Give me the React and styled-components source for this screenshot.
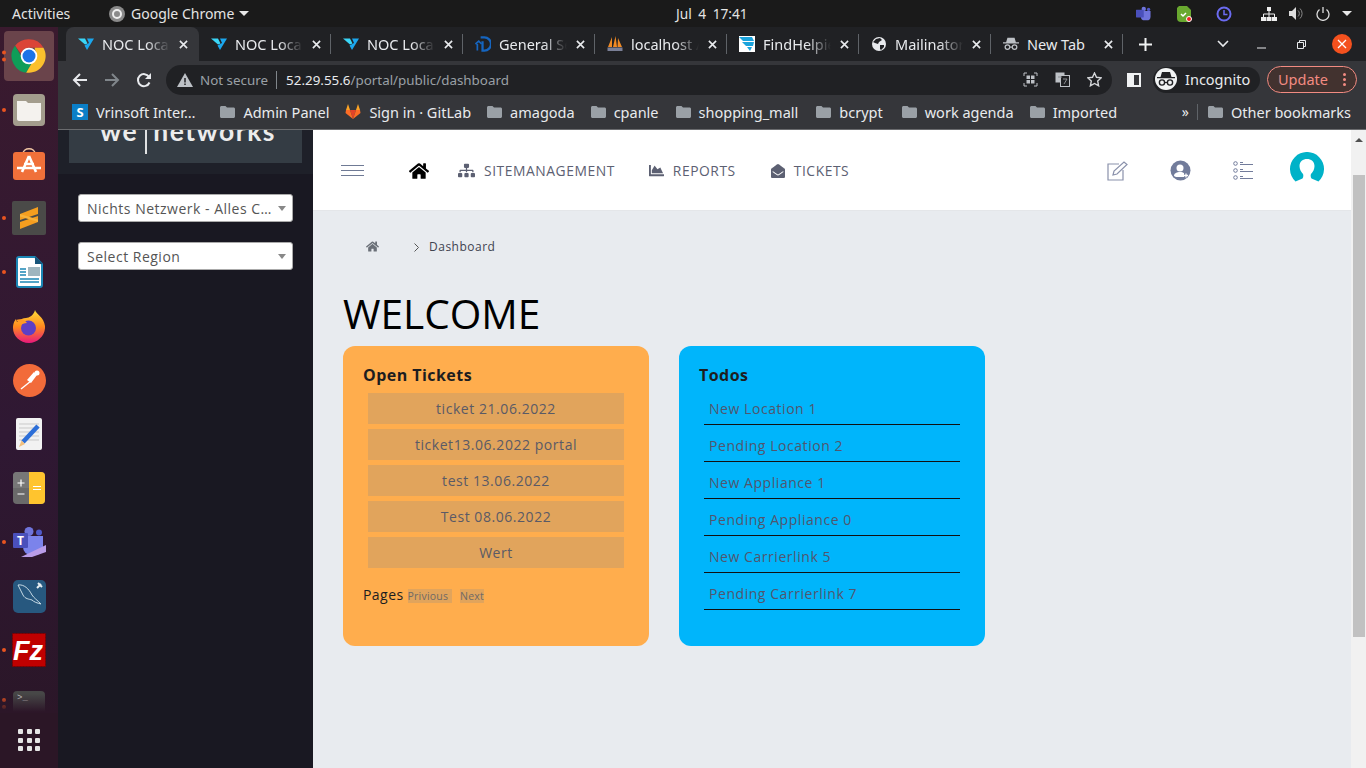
import React from "react";
import styled, { createGlobalStyle } from "styled-components";
import { FaHome, FaSitemap, FaChartArea, FaEnvelopeOpen } from "react-icons/fa";

const GlobalStyle = createGlobalStyle`
  html, body { margin: 0; padding: 0; height: 100%; overflow: hidden; }
  body { font-family: "Open Sans", "Noto Sans", sans-serif; }
  * { box-sizing: border-box; }
`;

const uiFont = `"Noto Sans", "Open Sans", sans-serif`;

const Screen = styled.div`
  width: 1366px;
  height: 768px;
  display: flex;
  flex-direction: column;
  overflow: hidden;
`;

/* gnome top bar */
const TopBar = styled.div`
  height: 27px;
  flex: none;
  background: #1a1a1a;
  color: #e4e4e4;
  font: 14px ${uiFont};
  display: grid;
  grid-template-columns: 676px auto 1fr;
  align-items: center;
`;
const TopLeft = styled.div`
  display: flex;
  align-items: center;
  padding-left: 12px;
`;
const AppName = styled.span`
  margin: 0 5px 0 6px;
`;
const Activities = styled.span`
  width: 97px;
`;
const Clock = styled.div`
  word-spacing: 3px;
  font-size: 13.7px;
`;
const Tray = styled.div`
  display: flex;
  align-items: center;
  justify-content: flex-end;
  gap: 29px;
  padding-right: 14px;
`;
const TrayGroup = styled.div`
  display: flex;
  align-items: center;
  gap: ${({ gap }) => gap}px;
`;
const Caret = styled.span`
  width: 0;
  height: 0;
  border-left: 5px solid transparent;
  border-right: 5px solid transparent;
  border-top: 5px solid #e8e8e8;
`;

const Desk = styled.div`
  flex: 1;
  min-height: 0;
  display: flex;
`;

/* ubuntu dock */
const Dock = styled.div`
  width: 58px;
  flex: none;
  background: linear-gradient(180deg, #3a1a2e 0%, #2f1833 55%, #2a1626 100%);
  padding-top: 2px;
  display: flex;
  flex-direction: column;
  align-items: center;
  position: relative;
`;
const DockItem = styled.div`
  width: 50px;
  height: ${({ short }) => (short ? "37px" : "50px")};
  margin-bottom: ${({ short }) => (short ? "0" : "4px")};
  margin-top: ${({ first }) => (first ? "2px" : "0")};
  padding-top: ${({ short }) => (short ? "12px" : "0")};
  border-radius: 4px;
  background: ${({ active }) => (active ? "#6a444b" : "transparent")};
  display: flex;
  align-items: ${({ short }) => (short ? "flex-start" : "center")};
  justify-content: center;
  position: relative;
`;
const RunDots = styled.div`
  position: absolute;
  left: -2px;
  top: ${({ short }) => (short ? "19px" : "50%")};
  transform: ${({ short }) => (short ? "none" : "translateY(-50%)")};
  display: flex;
  flex-direction: column;
  gap: 3px;
`;
const RunDot = styled.span`
  width: 4px;
  height: 4px;
  border-radius: 50%;
  background: #e95420;
`;
const DockFade = styled.div`
  position: absolute;
  left: 0;
  right: 0;
  top: 662px;
  height: 24px;
  background: linear-gradient(180deg, rgba(44, 22, 40, 0) 20%, #2c1628 95%);
`;
const DockBase = styled.div`
  position: absolute;
  left: 0;
  right: 0;
  top: 686px;
  bottom: 0;
  background: #2b1626;
`;
const AppGrid = styled.div`
  display: grid;
  grid-template-columns: repeat(3, 5px);
  grid-auto-rows: 5px;
  gap: 3.5px;
  position: absolute;
  top: 702px;
`;
const AppDot = styled.span`
  background: #e6e6e6;
  border-radius: 1px;
`;

const Main = styled.div`
  flex: 1;
  min-width: 0;
  display: flex;
  flex-direction: column;
`;

/* chrome frame */
const TabStrip = styled.div`
  height: 34px;
  flex: none;
  background: #202124;
  display: flex;
  align-items: stretch;
  padding-left: 8px;
  color: #e8eaed;
  font: 14.5px ${uiFont};
`;
const Tab = styled.div`
  width: ${({ active }) => (active ? "133px" : "132px")};
  flex: none;
  display: flex;
  align-items: center;
  padding-left: 12px;
  position: relative;
  background: ${({ active }) => (active ? "#35363a" : "transparent")};
  border-radius: 8px 8px 0 0;
  &::after {
    content: "";
    position: absolute;
    right: 0;
    top: 7px;
    bottom: 7px;
    width: 1px;
    background: ${({ sep }) => (sep ? "#5f6368" : "transparent")};
  }
`;
const TabIcon = styled.span`
  width: 16px;
  height: 16px;
  flex: none;
  display: flex;
  margin-right: 8px;
`;
const TabLabel = styled.span`
  width: 68px;
  margin-right: 5px;
  flex: none;
  white-space: nowrap;
  overflow: hidden;
  -webkit-mask-image: ${({ plain }) => (plain ? "none" : "linear-gradient(90deg, #000 65%, transparent 100%)")};
`;
const TabClose = styled.span`
  width: 16px;
  height: 16px;
  flex: none;
  display: flex;
  align-items: center;
  justify-content: center;
`;
const WindowButtons = styled.div`
  display: flex;
  align-items: center;
  flex: 1;
`;
const NewTab = styled.span`
  margin-left: 16px;
  display: flex;
`;
const TabSearch = styled.span`
  margin-left: 65px;
  display: flex;
`;
const WinBtn = styled.span`
  margin-left: ${({ gap }) => gap}px;
  display: flex;
`;
const CloseBtn = styled.span`
  width: 20px;
  height: 20px;
  border-radius: 50%;
  background: #f4511e;
  margin-left: 26px;
  display: flex;
  align-items: center;
  justify-content: center;
`;

const Toolbar = styled.div`
  height: 35px;
  flex: none;
  background: #35363a;
  display: flex;
  align-items: center;
  padding: 2px 0 0 14px;
`;
const NavBtn = styled.span`
  width: 32px;
  display: flex;
  justify-content: flex-start;
`;
const Omnibox = styled.div`
  width: 946px;
  height: 30px;
  margin-left: -2px;
  flex: none;
  border-radius: 15px;
  background: #202124;
  display: flex;
  align-items: center;
  padding: 0 10px 0 11px;
  font: 13.4px ${uiFont};
  color: #9aa0a6;
`;
const NotSecure = styled.span`
  margin-left: 7px;
  padding-right: 8px;
  border-right: 1px solid #80868b;
  line-height: 18px;
`;
const Url = styled.span`
  margin-left: 9px;
  flex: 1;
  white-space: nowrap;
`;
const Host = styled.span`
  color: #e8eaed;
`;
const OmniIcons = styled.div`
  display: flex;
  align-items: center;
  gap: 17px;
`;
const SidePanel = styled.span`
  width: 14px;
  height: 14px;
  margin-left: 15px;
  border: 2px solid #f1f3f4;
  border-left-width: 7px;
  flex: none;
`;
const Incognito = styled.div`
  width: 107px;
  height: 26px;
  margin-left: 12px;
  border-radius: 13px;
  background: #202124;
  display: flex;
  align-items: center;
  gap: 8px;
  padding: 0 0 1px 2px;
  font: 14.5px ${uiFont};
  color: #e8eaed;
  flex: none;
`;
const IncognitoBadge = styled.span`
  width: 22px;
  height: 22px;
  border-radius: 50%;
  background: #f1f3f4;
  display: flex;
  align-items: center;
  justify-content: center;
`;
const Update = styled.div`
  width: 90px;
  height: 27px;
  margin-left: 7px;
  border-radius: 14px;
  border: 1px solid #f28b82;
  background: #42322f;
  color: #f28b82;
  font: 14.5px ${uiFont};
  display: flex;
  align-items: center;
  justify-content: space-between;
  padding: 0 6px 1px 10px;
  flex: none;
`;
const Kebab = styled.span`
  display: flex;
  flex-direction: column;
  gap: 2px;
  padding-right: 4px;
`;
const KebabDot = styled.span`
  width: 3px;
  height: 3px;
  border-radius: 50%;
  background: #f28b82;
`;

const Bookmarks = styled.div`
  height: 34px;
  flex: none;
  background: #35363a;
  border-bottom: 1px solid #6a6b6e;
  display: flex;
  align-items: center;
  padding: 0 0 2px 14px;
  font: 14.5px ${uiFont};
  color: #e8eaed;
  white-space: nowrap;
`;
const Bookmark = styled.div`
  display: flex;
  align-items: center;
  gap: 8px;
  margin-right: ${({ gap }) => gap}px;
`;
const BookmarkEnd = styled.div`
  display: flex;
  align-items: center;
  margin-left: auto;
  padding-right: 15px;
`;
const More = styled.span`
  font-size: 14px;
  margin-right: 8px;
`;
const BmSep = styled.span`
  width: 1px;
  height: 16px;
  background: #5f6368;
  margin-right: 10px;
`;
const SBadge = styled.span`
  width: 16px;
  height: 16px;
  background: #0b7fc7;
  color: #fff;
  font: bold 13px/16px ${uiFont};
  text-align: center;
`;

/* page */
const Page = styled.div`
  flex: 1;
  min-height: 0;
  display: flex;
`;
const Sidebar = styled.aside`
  width: 255px;
  flex: none;
  background: #191822;
`;
const LogoRow = styled.div`
  height: 44px;
  padding: 0 11px;
  background: #1e2029;
`;
const LogoBox = styled.div`
  height: 33px;
  background: #343c44;
  overflow: hidden;
  padding: 0 0 0 31px;
  color: #ececec;
  font: 700 26.5px/28px "Lato", sans-serif;
  letter-spacing: 1.5px;
  white-space: nowrap;
`;
const LogoText = styled.div`
  margin-top: -13px;
  height: 48px;
`;
const LogoBar = styled.span`
  display: inline-block;
  width: 2px;
  height: 32px;
  margin: 0 6px 0 7px;
  background: #dfe1e2;
  vertical-align: -13px;
`;
const Selects = styled.div`
  padding: 20px 20px 0;
  display: flex;
  flex-direction: column;
  gap: 20px;
`;
const SelectBox = styled.div`
  height: 28px;
  background: #fff;
  border: 1px solid #aaa;
  border-radius: 3px;
  padding: 0 20px 0 8px;
  position: relative;
  display: flex;
  align-items: center;
  font-size: 14px;
  letter-spacing: 0.5px;
  color: #555;
  &::after {
    content: "";
    position: absolute;
    right: 6px;
    top: 11px;
    border-left: 4px solid transparent;
    border-right: 4px solid transparent;
    border-top: 5px solid #888;
  }
`;
const SelectText = styled.span`
  overflow: hidden;
  white-space: nowrap;
  text-overflow: ellipsis;
`;

const Content = styled.main`
  flex: 1;
  min-width: 0;
  background: #e8ebef;
`;
const Header = styled.header`
  height: 81px;
  background: #fff;
  border-bottom: 1px solid #e4e6e9;
  display: flex;
  align-items: center;
  padding: 1px 27px 0 28px;
`;
const Burger = styled.div`
  width: 23px;
  display: flex;
  flex-direction: column;
  gap: 4px;
  margin-right: 45px;
`;
const BurgerLine = styled.span`
  height: 1px;
  background: #6f7a95;
`;
const NavItem = styled.div`
  display: flex;
  align-items: center;
  gap: 9px;
  margin-right: ${({ gap }) => gap}px;
  color: #5c6072;
  font-size: 13.85px;
  letter-spacing: 0.55px;
`;
const HeaderIcons = styled.div`
  margin-left: auto;
  display: flex;
  align-items: center;
`;
const HeaderIcon = styled.span`
  display: flex;
  margin-right: ${({ gap }) => gap}px;
`;
const Avatar = styled.div`
  width: 34px;
  height: 34px;
  margin-top: -4px;
  display: flex;
`;
const Body = styled.div`
  padding: 0 30px;
`;
const Breadcrumb = styled.div`
  height: 71px;
  padding-left: 23px;
  display: flex;
  align-items: center;
  font-size: 12px;
  color: #3f4350;
  letter-spacing: 0.5px;
`;
const CrumbSep = styled.span`
  display: flex;
  margin: 2px 10px 0 35px;
`;
const Welcome = styled.h1`
  margin: 0;
  height: 64px;
  font-size: 40.6px;
  line-height: 64px;
  font-weight: 400;
  color: #000;
`;
const Cards = styled.div`
  display: flex;
  gap: 30px;
`;
const Card = styled.section`
  width: 306px;
  height: 300px;
  border-radius: 12px;
  background: ${({ tone }) => tone};
  padding: 18px 20px 0;
`;
const CardTitle = styled.h2`
  margin: 0;
  font-size: 16px;
  line-height: 22px;
  font-weight: 700;
  letter-spacing: 0.45px;
  color: #1d1d1f;
`;
const TicketList = styled.div`
  margin: 7px 5px 0;
  display: flex;
  flex-direction: column;
  gap: 5px;
`;
const Ticket = styled.div`
  height: 31px;
  background: #e1a45c;
  color: #5a5a66;
  font-size: 14px;
  line-height: 31px;
  letter-spacing: 0.55px;
  text-align: center;
`;
const Pager = styled.div`
  margin-top: 17px;
  display: flex;
  align-items: center;
  font-size: 14px;
  letter-spacing: 0.45px;
  color: #1d1d1f;
`;
const PageTag = styled.span`
  margin-left: ${({ gap }) => gap}px;
  padding-right: ${({ pad }) => pad}px;
  height: 14px;
  background: #e1a45c;
  color: #6f6a66;
  font-size: 10.5px;
  line-height: 15px;
  letter-spacing: 0.2px;
  margin-top: 2px;
`;
const TodoList = styled.div`
  margin: 2px 5px 0;
  display: flex;
  flex-direction: column;
`;
const Todo = styled.div`
  height: 37px;
  border-bottom: 1px solid #111;
  padding: 10px 0 0 5px;
  color: #51566e;
  font-size: 14px;
  line-height: 22px;
  letter-spacing: 0.55px;
`;

const ScrollBar = styled.div`
  width: 15px;
  flex: none;
  background: #f1f1f1;
  display: flex;
  flex-direction: column;
  align-items: center;
  padding-top: 8px;
`;
const ScrollUp = styled.span`
  border-left: 4px solid transparent;
  border-right: 4px solid transparent;
  border-bottom: 4px solid #505050;
`;
const ScrollThumb = styled.div`
  width: 12px;
  height: 462px;
  margin-top: 33px;
  background: #c1c1c1;
`;

/* drawings */
const Chromium = ({ size = 40 }) => (
  <svg width={size} height={size} viewBox="0 0 48 48">
    <path fill="#db4437" d="M24 4a20 20 0 0 1 17.3 10H24a10 10 0 0 0-9.6 7.2L7.3 11.8A20 20 0 0 1 24 4z" />
    <path fill="#0f9d58" d="M24 44A20 20 0 0 1 7.3 11.8l8.7 15a10 10 0 0 0 11 6.8L20.6 43.7A20 20 0 0 1 24 44z" />
    <path fill="#fbc02d" d="M41.3 14A20 20 0 0 1 24 44h-3.4l8.4-14.4A10 10 0 0 0 31 16v-2z" />
    <circle cx="24" cy="24" r="10" fill="#fff" />
    <circle cx="24" cy="24" r="7.8" fill="#1a73e8" />
  </svg>
);
const Folder = ({ color = "#9aa0a6" }) => (
  <svg width="15" height="13" viewBox="0 0 15 13">
    <path fill={color} d="M1.500 1h4l1.500 1.600h6.500c.8 0 1.500.6 1.500 1.400v7.500c0 .8-.7 1.500-1.500 1.500h-12C.7 13 0 12.300 0 11.500v-9C0 1.700.7 1 1.500 1z" />
  </svg>
);
const X = ({ size = 9, color = "#e8eaed", w = 1.8 }) => (
  <svg width={size} height={size} viewBox="0 0 10 10">
    <path d="M1 1l8 8M9 1l-8 8" stroke={color} strokeWidth={w} fill="none" />
  </svg>
);
const Noc = () => (
  <svg width="16" height="16" viewBox="0 0 16 16">
    <path fill="#3ad6f7" d="M0 2.500h7l2.500 5L7 8.500z" />
    <path fill="#1ba7ee" d="M9 2.500h7L9 14 6.500 9.500 11 7z" />
  </svg>
);
const Spy = ({ color = "#202124", size = 18 }) => (
  <svg width={size} height={size} viewBox="0 0 18 18">
    <path fill={color} d="M5 2h8l1.500 5H18v1.300H0V7h3.500z" />
    <circle cx="5" cy="12.500" r="2.600" fill="none" stroke={color} strokeWidth="1.400" />
    <circle cx="13" cy="12.500" r="2.600" fill="none" stroke={color} strokeWidth="1.400" />
    <path d="M7.500 12.500h3" stroke={color} strokeWidth="1.200" />
  </svg>
);
const Favicon = ({ kind }) => {
  if (kind === "noc") return <Noc />;
  if (kind === "general")
    return (
      <svg width="17" height="16" viewBox="0 0 17 16">
        <path d="M6 1h4a6.500 6.500 0 0 1 0 14H8V5" fill="none" stroke="#1565c0" strokeWidth="2.400" />
        <path d="M0.500 8L4 5l3 3M2.500 8v7" fill="none" stroke="#1565c0" strokeWidth="1.800" />
      </svg>
    );
  if (kind === "pma")
    return (
      <svg width="16" height="16" viewBox="0 0 16 16">
        <path fill="#f08a24" d="M5 1L1 11h4zM8.500 0L6 11h4zM11 2l-.500 9H15z" />
        <rect x="0.500" y="11.500" width="15" height="3.500" fill="#7a7f96" />
      </svg>
    );
  if (kind === "find")
    return (
      <svg width="16" height="16" viewBox="0 0 16 16">
        <rect width="16" height="16" fill="#fff" />
        <path fill="#1aa3dc" d="M0 1h13l2 4H4zM3 6h12l-1 4H7zM8 11h5l-2 4z" />
      </svg>
    );
  if (kind === "globe")
    return (
      <svg width="16" height="16" viewBox="0 0 16 16">
        <circle cx="8" cy="8" r="7" fill="#e8eaed" />
        <path fill="#202124" d="M5 3l4-1 2 2-3 2-1 2-3-1-2-1zM9 9l4 0 0 2-3 3-1-1z" />
      </svg>
    );
  return <Spy color="#bdc1c6" size={16} />;
};
const Arrow = ({ color, flip }) => (
  <svg width="16" height="16" viewBox="0 0 16 16" style={flip ? { transform: "scaleX(-1)" } : undefined}>
    <path d="M15 8H2M8 2L2 8l6 6" fill="none" stroke={color} strokeWidth="2" />
  </svg>
);
const Reload = () => (
  <svg width="16" height="16" viewBox="0 0 16 16">
    <path d="M13.500 10.500A6 6 0 1 1 13 4.800" fill="none" stroke="#e8eaed" strokeWidth="2" />
    <path fill="#e8eaed" d="M15 1v6H9z" />
  </svg>
);
const Warn = () => (
  <svg width="16" height="14" viewBox="0 0 16 14">
    <path fill="#bdc1c6" d="M8 0l8 14H0z" />
    <path d="M8 5v4.500M8 10.500v1.500" stroke="#202124" strokeWidth="1.500" />
  </svg>
);
const QrIcon = () => (
  <svg width="15" height="15" viewBox="0 0 15 15">
    <path d="M1 4V1h3M11 1h3v3M14 11v3h-3M4 14H1v-3" fill="none" stroke="#bdc1c6" />
    <path fill="#bdc1c6" d="M3.500 3.500h3.500v3.500H3.500zM8 3.500h3.500v3.500H8zM3.500 8h3.500v3.500H3.500zM8 8h3.500v3.500H8z" />
  </svg>
);
const TranslateIcon = () => (
  <svg width="15" height="15" viewBox="0 0 15 15">
    <rect x="0.500" y="0.500" width="9" height="10" fill="#bdc1c6" />
    <rect x="5.500" y="3.500" width="9" height="11" fill="#202124" stroke="#bdc1c6" />
    <path d="M3 5h4M8 7h4l-3 5" fill="none" stroke="#8a8d91" />
  </svg>
);
const Star = () => (
  <svg width="15" height="15" viewBox="0 0 15 15">
    <path d="M7.500 1l2 4.300 4.700.6-3.500 3.200.9 4.700-4.100-2.300-4.100 2.300.9-4.700L.8 5.900l4.700-.6z" fill="none" stroke="#d5d7da" strokeWidth="1.400" />
  </svg>
);
const GitLab = () => (
  <svg width="16" height="15" viewBox="0 0 16 15">
    <path fill="#e24329" d="M8 15L5 6h6z" />
    <path fill="#fc6d26" d="M8 15L0.500 9 1 6h4zM8 15l7.500-6L15 6h-4z" />
    <path fill="#fca326" d="M1 6l2-6 2 6zM15 6l-2-6-2 6z" />
  </svg>
);

const dockIcons = {
  chrome: <Chromium size={40} />,
  files: (
    <svg width="32" height="32" viewBox="0 0 32 32">
      <rect width="32" height="32" rx="4" fill="#a39d8d" />
      <path fill="#f4f2ee" d="M4 7h9l2 2h13v16c0 1-1 2-2 2H6c-1 0-2-1-2-2z" />
    </svg>
  ),
  store: (
    <svg width="32" height="32" viewBox="0 0 32 32">
      <path d="M10 6c0-7 12-7 12 0" fill="none" stroke="#f4c9a5" strokeWidth="1.500" />
      <rect y="4" width="32" height="28" rx="3" fill="#f0703a" />
      <path d="M16 8l-7 16M16 8l7 16M4 20h24M11 16h10" fill="none" stroke="#fff" strokeWidth="2.600" />
    </svg>
  ),
  sublime: (
    <svg width="34" height="34" viewBox="0 0 34 34">
      <rect width="34" height="34" rx="2" fill="#4a4a48" />
      <path fill="#f59e1f" d="M26 6v7L8 19v-6zM26 15v6L8 28v-7z" />
      <path fill="#f8b23a" d="M8 13l18 5.500V21L8 15.500z" />
    </svg>
  ),
  writer: (
    <svg width="27" height="32" viewBox="0 0 27 32">
      <path fill="#fff" stroke="#1b86b5" strokeWidth="2" d="M1 3a2 2 0 0 1 2-2h16l7 7v21a2 2 0 0 1-2 2H3a2 2 0 0 1-2-2z" />
      <path fill="#18557a" d="M19 0l8 8h-8z" />
      <path stroke="#1b86b5" strokeWidth="1.500" d="M4 13h6M4 16h6M4 19h6M4 23h19M4 26h19" />
      <rect x="12" y="11" width="12" height="9" fill="#9fb6bf" />
    </svg>
  ),
  firefox: (
    <svg width="32" height="33" viewBox="0 0 32 33">
      <defs>
        <linearGradient id="ff" x1="0" y1="0" x2="0" y2="1">
          <stop offset="0" stopColor="#ffde3a" />
          <stop offset="0.5" stopColor="#ff8a1e" />
          <stop offset="1" stopColor="#e8187c" />
        </linearGradient>
      </defs>
      <path fill="url(#ff)" d="M22 0c1 4 9 7 10 16 .7 9-7 17-16 17S0 26 0 18c0-5 2-8 3-9 0 2 1 3 2 3 2-3 5-4 8-4 3 0 8-3 9-8z" />
      <circle cx="15.500" cy="18" r="7.500" fill="#5d3fc4" />
      <path fill="#ff9a24" d="M3 10c5-2 9 0 11 3-3 0-5 1-6 2z" />
    </svg>
  ),
  postman: (
    <svg width="33" height="33" viewBox="0 0 33 33">
      <circle cx="16.500" cy="16.500" r="16.500" fill="#f26b3a" />
      <path d="M8 25l10-8" stroke="#fff" strokeWidth="1.500" />
      <path fill="#fff" d="M14 16l7-8 3 3-6 8z" />
      <circle cx="24" cy="9" r="2.500" fill="#fff" />
    </svg>
  ),
  editor: (
    <svg width="26" height="32" viewBox="0 0 26 32">
      <rect width="26" height="32" rx="2" fill="#f2f2f2" />
      <path stroke="#c9c9c9" d="M3 6h20M3 10h20M3 14h20M3 18h20M3 22h20" />
      <path d="M7 24L22 8" stroke="#2d6fd8" strokeWidth="4.500" />
      <path fill="#f0c080" d="M3 29l2.500-6.500 3.500 3.500z" />
    </svg>
  ),
  calc: (
    <svg width="32" height="32" viewBox="0 0 32 32">
      <rect width="32" height="32" rx="4" fill="#6a6a6a" />
      <path fill="#ffc42e" d="M16 0h12a4 4 0 0 1 4 4v24a4 4 0 0 1-4 4H16z" />
      <path fill="#777" d="M0 4a4 4 0 0 1 4-4h12v16H0z" />
      <path stroke="#fff" strokeWidth="1.200" d="M4.500 11h7M8 7.500v7M4.500 22h7M20 14.500h8M20 17.500h8" />
    </svg>
  ),
  teams: (
    <svg width="33" height="30" viewBox="0 0 33 30">
      <circle cx="16" cy="4.500" r="4.500" fill="#6f74db" />
      <circle cx="26" cy="5.500" r="3" fill="#5059c9" />
      <path fill="#7b83eb" d="M10 9h20v11a8 8 0 0 1-8 8h-4a8 8 0 0 1-8-8z" />
      <rect y="6" width="15" height="15" rx="1" fill="#4a50bb" />
      <text x="7.500" y="18" textAnchor="middle" fontSize="12" fontWeight="700" fill="#fff" fontFamily="Open Sans">T</text>
      <path fill="#b99ce8" d="M8 30l25-12v7l-14 5z" />
    </svg>
  ),
  workbench: (
    <svg width="33" height="33" viewBox="0 0 33 33">
      <rect width="33" height="33" rx="5" fill="#27587f" />
      <path d="M5 5c6-1 11 4 14 10 2 3 5 5 9 9-4-1-7-2-9-4-3-1-7-1-9-5C8 12 7 8 5 5z" fill="none" stroke="#c8dbe6" />
      <path d="M24 8l4-4M25 3l4 4" stroke="#e8eef2" strokeWidth="2" />
    </svg>
  ),
  filezilla: (
    <svg width="34" height="34" viewBox="0 0 34 34">
      <rect x="0.500" y="0.500" width="33" height="33" fill="#bf0000" stroke="#7a0000" strokeDasharray="2 1" />
      <text x="16" y="27" textAnchor="middle" fontSize="27" fontWeight="700" fontStyle="italic" fill="#fff" fontFamily="Liberation Sans">Fz</text>
    </svg>
  ),
  terminal: (
    <svg width="32" height="32" viewBox="0 0 32 32">
      <rect width="32" height="32" rx="4" fill="#474747" />
      <text x="4" y="9" fontSize="9" fill="#d0d0d0" fontFamily="Liberation Mono">&gt;_</text>
    </svg>
  ),
};

const dock = [
  { id: "chrome", active: true, dots: 2 },
  { id: "files", dots: 1 },
  { id: "store" },
  { id: "sublime", dots: 1 },
  { id: "writer", dots: 1 },
  { id: "firefox" },
  { id: "postman" },
  { id: "editor" },
  { id: "calc" },
  { id: "teams", dots: 1 },
  { id: "workbench" },
  { id: "filezilla", dots: 1 },
  { id: "terminal", dots: 2, short: true },
];

const tabs = [
  { title: "NOC Local Appliance", icon: "noc", active: true },
  { title: "NOC Local Appliance", icon: "noc", sep: true },
  { title: "NOC Local Appliance", icon: "noc", sep: true },
  { title: "General Settings", icon: "general", sep: true },
  { title: "localhost / phpMyAdmin", icon: "pma", sep: true },
  { title: "FindHelpie Portal", icon: "find", sep: true },
  { title: "Mailinator Inbox", icon: "globe", sep: true },
  { title: "New Tab", icon: "spy", sep: true, plain: true },
];

const bookmarks = [
  { name: "Vrinsoft Inter…", icon: <SBadge>S</SBadge>, gap: 25 },
  { name: "Admin Panel", icon: <Folder />, gap: 16 },
  { name: "Sign in · GitLab", icon: <GitLab />, gap: 16 },
  { name: "amagoda", icon: <Folder />, gap: 16 },
  { name: "cpanle", icon: <Folder />, gap: 17 },
  { name: "shopping_mall", icon: <Folder />, gap: 18 },
  { name: "bcrypt", icon: <Folder />, gap: 19 },
  { name: "work agenda", icon: <Folder />, gap: 16 },
  { name: "Imported", icon: <Folder />, gap: 0 },
];

const tickets = ["ticket 21.06.2022", "ticket13.06.2022 portal", "test 13.06.2022", "Test 08.06.2022", "Wert"];
const todos = [
  "New Location 1",
  "Pending Location 2",
  "New Appliance 1",
  "Pending Appliance 0",
  "New Carrierlink 5",
  "Pending Carrierlink 7",
];

const App = () => (
  <Screen>
    <GlobalStyle />
    <TopBar>
      <TopLeft>
        <Activities>Activities</Activities>
        <svg width="16" height="16" viewBox="0 0 16 16">
          <circle cx="8" cy="8" r="8" fill="#8a8a8a" />
          <circle cx="8" cy="8" r="4" fill="none" stroke="#eee" strokeWidth="2" />
        </svg>
        <AppName>Google Chrome</AppName>
        <Caret />
      </TopLeft>
      <Clock>Jul 4 17:41</Clock>
      <Tray>
        <TrayGroup gap={24}>
          <svg width="16" height="16" viewBox="0 0 33 30">
            <circle cx="16" cy="4.500" r="4.500" fill="#6f74db" />
            <circle cx="26" cy="5.500" r="3.500" fill="#5059c9" />
            <path fill="#6f74db" d="M10 9h20v11a8 8 0 0 1-8 8h-4a8 8 0 0 1-8-8z" />
            <rect y="6" width="16" height="16" rx="1" fill="#4a50bb" />
          </svg>
          <svg width="16" height="16" viewBox="0 0 16 16">
            <path fill="#69a82f" d="M3 0h8l4 4v8a4 4 0 0 1-4 4H5a4 4 0 0 1-4-4V2z" />
            <path d="M5 8l2 2 3-3" stroke="#fff" strokeWidth="1.500" fill="none" />
            <circle cx="13" cy="13" r="2.500" fill="#f02020" stroke="#fff" />
          </svg>
          <svg width="16" height="16" viewBox="0 0 16 16">
            <circle cx="8" cy="8" r="6.500" fill="none" stroke="#6b6bf0" strokeWidth="2" />
            <path d="M8 4v4.500h3.500" fill="none" stroke="#6b6bf0" strokeWidth="1.500" />
          </svg>
        </TrayGroup>
        <TrayGroup gap={12}>
          <svg width="16" height="16" viewBox="0 0 16 16">
            <path fill="#eee" d="M6 1h4v4H6zM0 11h5v4H0zM5.500 11h5v4h-5zM11 11h5v4h-5z" />
            <path d="M8 5v3M2.500 11V8h11v3M8 8v3" fill="none" stroke="#eee" />
          </svg>
          <svg width="15" height="15" viewBox="0 0 15 15">
            <path fill="#ddd" d="M0 5h3l4-4v13l-4-4H0z" />
            <path d="M9 4.500a4 4 0 0 1 0 6M11 2.500a7 7 0 0 1 0 10" fill="none" stroke="#888" />
          </svg>
          <svg width="14" height="15" viewBox="0 0 14 15">
            <path d="M7 1v6M3.500 3.500a6 6 0 1 0 7 0" fill="none" stroke="#ddd" strokeWidth="1.300" />
          </svg>
          <Caret />
        </TrayGroup>
      </Tray>
    </TopBar>
    <Desk>
      <Dock>
        {dock.map(({ id, active, dots, short }, i) => (
          <DockItem key={id} active={active} short={short} first={i === 0}>
            {dots && (
              <RunDots short={short}>
                {Array.from({ length: dots }).map((_, d) => (
                  <RunDot key={d} />
                ))}
              </RunDots>
            )}
            {dockIcons[id]}
          </DockItem>
        ))}
        <DockFade />
        <DockBase />
        <AppGrid>
          {Array.from({ length: 9 }).map((_, i) => (
            <AppDot key={i} />
          ))}
        </AppGrid>
      </Dock>
      <Main>
        <TabStrip>
          {tabs.map((t, i) => (
            <Tab key={i} active={t.active} sep={t.sep}>
              <TabIcon>
                <Favicon kind={t.icon} />
              </TabIcon>
              <TabLabel plain={t.plain}>{t.title}</TabLabel>
              <TabClose>
                <X />
              </TabClose>
            </Tab>
          ))}
          <WindowButtons>
            <NewTab>
              <svg width="13" height="13" viewBox="0 0 13 13">
                <path d="M6.500 0v13M0 6.500h13" stroke="#f1f3f4" strokeWidth="2" />
              </svg>
            </NewTab>
            <TabSearch>
              <svg width="12" height="8" viewBox="0 0 12 8">
                <path d="M1 1l5 5 5-5" fill="none" stroke="#e8eaed" strokeWidth="1.600" />
              </svg>
            </TabSearch>
            <WinBtn gap={28}>
              <svg width="9" height="9" viewBox="0 0 9 9">
                <path d="M0 8h9" stroke="#e8eaed" />
              </svg>
            </WinBtn>
            <WinBtn gap={31}>
              <svg width="9" height="9" viewBox="0 0 9 9">
                <path d="M.5 2.500h6v6h-6zM2.500 2.500V.5h6v6h-2" fill="none" stroke="#e8eaed" />
              </svg>
            </WinBtn>
            <CloseBtn>
              <X size={10} color="#fff" w={1.300} />
            </CloseBtn>
          </WindowButtons>
        </TabStrip>
        <Toolbar>
          <NavBtn>
            <Arrow color="#e8eaed" />
          </NavBtn>
          <NavBtn>
            <Arrow color="#80868b" flip />
          </NavBtn>
          <NavBtn>
            <Reload />
          </NavBtn>
          <Omnibox>
            <Warn />
            <NotSecure>Not secure</NotSecure>
            <Url>
              <Host>52.29.55.6</Host>/portal/public/dashboard
            </Url>
            <OmniIcons>
              <QrIcon />
              <TranslateIcon />
              <Star />
            </OmniIcons>
          </Omnibox>
          <SidePanel />
          <Incognito>
            <IncognitoBadge>
              <Spy />
            </IncognitoBadge>
            Incognito
          </Incognito>
          <Update>
            Update
            <Kebab>
              <KebabDot />
              <KebabDot />
              <KebabDot />
            </Kebab>
          </Update>
        </Toolbar>
        <Bookmarks>
          {bookmarks.map(({ name, icon, gap }) => (
            <Bookmark key={name} gap={gap}>
              {icon}
              {name}
            </Bookmark>
          ))}
          <BookmarkEnd>
            <More>»</More>
            <BmSep />
            <Bookmark gap={0}>
              <Folder />
              Other bookmarks
            </Bookmark>
          </BookmarkEnd>
        </Bookmarks>
        <Page>
          <Sidebar>
            <LogoRow>
              <LogoBox>
                <LogoText>
                  we
                  <LogoBar />
                  networks
                </LogoText>
              </LogoBox>
            </LogoRow>
            <Selects>
              <SelectBox>
                <SelectText>Nichts Netzwerk - Alles Clean</SelectText>
              </SelectBox>
              <SelectBox>
                <SelectText>Select Region</SelectText>
              </SelectBox>
            </Selects>
          </Sidebar>
          <Content>
            <Header>
              <Burger>
                <BurgerLine />
                <BurgerLine />
                <BurgerLine />
              </Burger>
              <NavItem gap={29}>
                <FaHome size={20} color="#000" />
              </NavItem>
              <NavItem gap={34}>
                <FaSitemap size={17} />
                SITEMANAGEMENT
              </NavItem>
              <NavItem gap={35}>
                <FaChartArea size={15} />
                REPORTS
              </NavItem>
              <NavItem gap={0}>
                <FaEnvelopeOpen size={14} />
                TICKETS
              </NavItem>
              <HeaderIcons>
                <HeaderIcon gap={42}>
                  <svg width="21" height="20" viewBox="0 0 21 20">
                    <path d="M12 3H1v16h15V9" fill="none" stroke="#8a91ab" strokeWidth="1.200" />
                    <path d="M6 14l1-4L17 1l3 2.500-10 9.500z" fill="none" stroke="#8a91ab" strokeWidth="1.200" />
                  </svg>
                </HeaderIcon>
                <HeaderIcon gap={42}>
                  <svg width="21" height="21" viewBox="0 0 21 21">
                    <circle cx="10.500" cy="10.500" r="10" fill="#727c9b" />
                    <circle cx="10" cy="8" r="3.500" fill="#fff" />
                    <path fill="#fff" d="M4 16c0-3 3-4 6-4 2 0 3 .5 4 1v4H6z" />
                    <path d="M14 15.500h4M16 13.500v4" stroke="#fff" strokeWidth="1.300" />
                  </svg>
                </HeaderIcon>
                <HeaderIcon gap={37}>
                  <svg width="20" height="19" viewBox="0 0 20 19">
                    <circle cx="2.500" cy="2.500" r="1.800" fill="none" stroke="#727c9b" />
                    <circle cx="2.500" cy="9.500" r="1.800" fill="none" stroke="#727c9b" />
                    <circle cx="2.500" cy="16.500" r="1.800" fill="none" stroke="#727c9b" />
                    <path d="M7 1.500h3M7 3.500h13M7 8.500h3M7 10.500h13M7 15.500h3M7 17.500h13" stroke="#727c9b" />
                  </svg>
                </HeaderIcon>
                <Avatar>
                  <svg width="34" height="34" viewBox="0 0 34 34">
                    <path
                      fill="#00b2c8"
                      d="M5.500 29.500A17 17 0 1 1 28.500 29.500L21.500 26.500C20.500 25 20.500 23 21 22C23 20 24.500 17 24.500 14C24.500 9.500 21 7 17 7S9.500 9.500 9.500 14C9.500 17 11 20 13 22C13.500 23 13.500 25 12.500 26.500Z"
                    />
                  </svg>
                </Avatar>
              </HeaderIcons>
            </Header>
            <Body>
              <Breadcrumb>
                <FaHome size={13} color="#6b7078" />
                <CrumbSep>
                  <svg width="5" height="9" viewBox="0 0 5 9">
                    <path d="M.5.500l4 4-4 4" fill="none" stroke="#555" />
                  </svg>
                </CrumbSep>
                Dashboard
              </Breadcrumb>
              <Welcome>WELCOME</Welcome>
              <Cards>
                <Card tone="#ffad4d">
                  <CardTitle>Open Tickets</CardTitle>
                  <TicketList>
                    {tickets.map((t) => (
                      <Ticket key={t}>{t}</Ticket>
                    ))}
                  </TicketList>
                  <Pager>
                    Pages
                    <PageTag gap={4} pad={4}>Privious</PageTag>
                    <PageTag gap={8} pad={0}>Next</PageTag>
                  </Pager>
                </Card>
                <Card tone="#00b5fb">
                  <CardTitle>Todos</CardTitle>
                  <TodoList>
                    {todos.map((t) => (
                      <Todo key={t}>{t}</Todo>
                    ))}
                  </TodoList>
                </Card>
              </Cards>
            </Body>
          </Content>
          <ScrollBar>
            <ScrollUp />
            <ScrollThumb />
          </ScrollBar>
        </Page>
      </Main>
    </Desk>
  </Screen>
);

export default App;
